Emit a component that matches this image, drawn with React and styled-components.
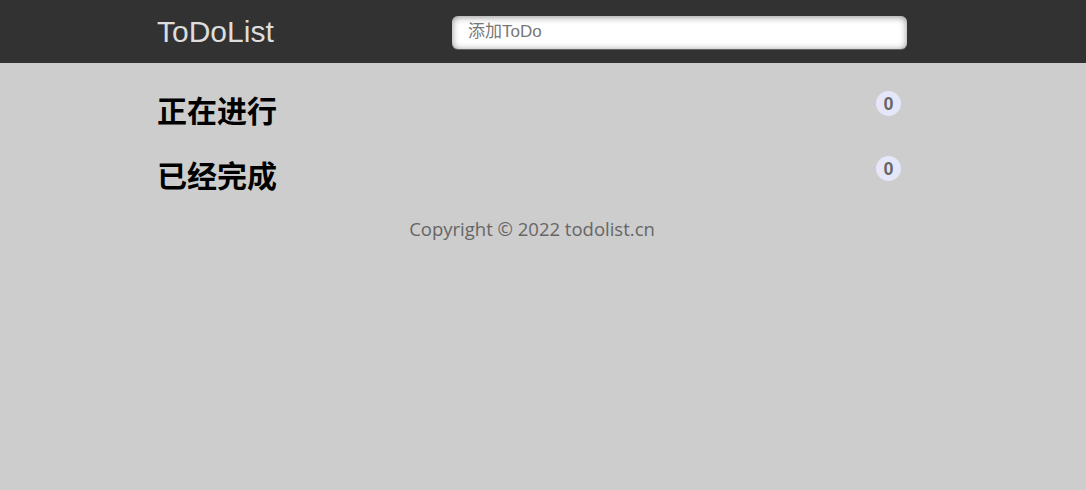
import React, { useState } from 'react';
import styled, { createGlobalStyle } from 'styled-components';

const GlobalStyle = createGlobalStyle`
  html, body {
    margin: 0;
    padding: 0;
    background: #cdcdcd;
    font-size: 20px;
    font-family: "Liberation Sans", "Noto Sans CJK SC", sans-serif;
  }
`;

const Header = styled.header`
  height: 63px;
  background: #323232;
`;

const Section = styled.section`
  width: 750px;
  margin: 0 auto;
  position: relative;
  left: -11px;
`;

const HeaderBar = styled(Section)`
  height: 100%;
  display: flex;
  align-items: center;
  justify-content: space-between;
`;

const Logo = styled.label`
  color: #ddd;
  font-size: 30px;
  line-height: 63px;
  font-family: "Liberation Sans", Arial, sans-serif;
  cursor: pointer;
`;

const AddInput = styled.input`
  width: 455px;
  height: 33px;
  box-sizing: border-box;
  margin-top: 1px;
  border: none;
  border-radius: 6px;
  text-indent: 14px;
  font-size: 17px;
  font-family: "Liberation Sans", "Noto Sans CJK SC", sans-serif;
  outline: none;
  box-shadow: 0 1px 0 rgba(255, 255, 255, 0.24), 0 1px 7px rgba(0, 0, 0, 0.45) inset;
  &::placeholder {
    color: #777;
  }
`;

const Main = styled(Section)`
  padding-top: 26px;
  display: flex;
  flex-direction: column;
  gap: 25px;
`;

const Group = styled.div`
  display: flex;
  justify-content: space-between;
  align-items: flex-start;
`;

const Title = styled.h2`
  margin: 0;
  height: 40px;
  line-height: 40px;
  font-size: 30px;
  font-weight: bold;
  color: #000;
  font-family: "Noto Sans CJK SC", sans-serif;
`;

const Count = styled.span`
  margin: 2px 6px 0 0;
  min-width: 25px;
  height: 25px;
  box-sizing: border-box;
  padding: 0 6px;
  border-radius: 13px;
  background: #e6e6fa;
  color: #666;
  font-size: 18px;
  font-weight: bold;
  line-height: 26px;
  text-align: center;
  font-family: "Liberation Sans", Arial, sans-serif;
`;

const Footer = styled.footer`
  width: 750px;
  margin: 0 auto;
  position: relative;
  left: -11px;
  padding-top: 23px;
  color: #666;
  font-size: 18.5px;
  line-height: 24px;
  text-align: center;
  font-family: "Open Sans", "Liberation Sans", sans-serif;
`;

function App() {
  const [todo, setTodo] = useState('');
  const doing = [];
  const done = [];

  return (
    <>
      <GlobalStyle />
      <Header>
        <HeaderBar as="div">
          <Logo>ToDoList</Logo>
          <AddInput
            value={todo}
            onChange={(e) => setTodo(e.target.value)}
            placeholder="添加ToDo"
          />
        </HeaderBar>
      </Header>
      <Main>
        <Group>
          <Title>正在进行</Title>
          <Count>{doing.length}</Count>
        </Group>
        <Group>
          <Title>已经完成</Title>
          <Count>{done.length}</Count>
        </Group>
      </Main>
      <Footer>Copyright © 2022 todolist.cn</Footer>
    </>
  );
}

export default App;
